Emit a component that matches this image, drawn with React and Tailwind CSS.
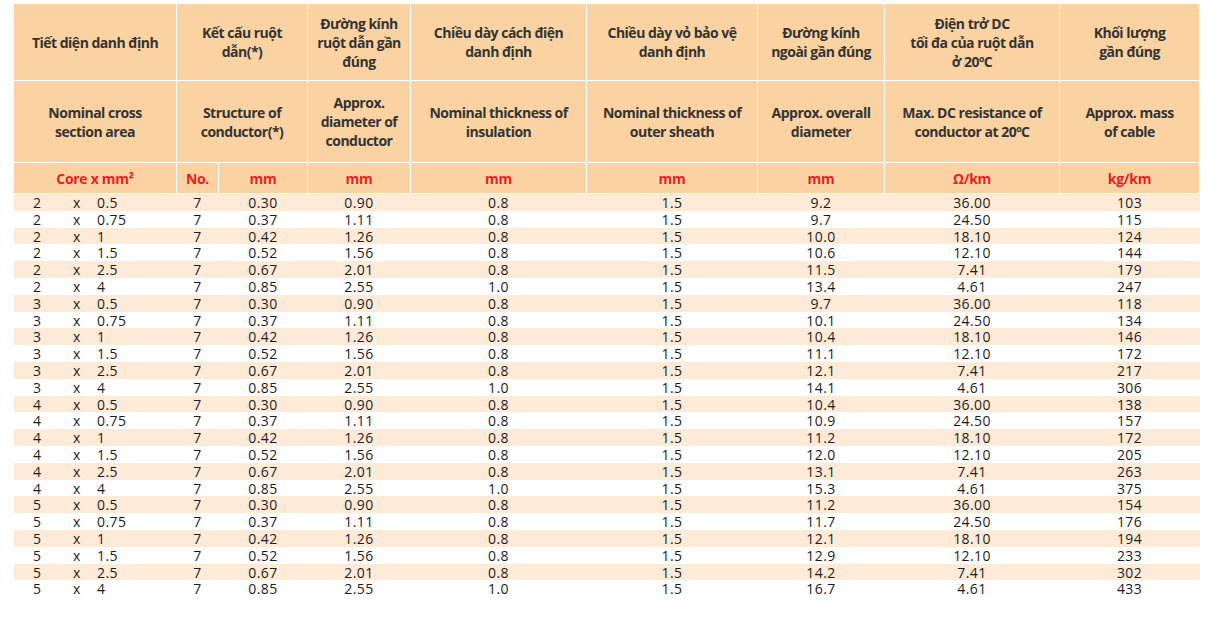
import React from "react";

const rows = [
  ["2", "0.5", "7", "0.30", "0.90", "0.8", "1.5", "9.2", "36.00", "103"],
  ["2", "0.75", "7", "0.37", "1.11", "0.8", "1.5", "9.7", "24.50", "115"],
  ["2", "1", "7", "0.42", "1.26", "0.8", "1.5", "10.0", "18.10", "124"],
  ["2", "1.5", "7", "0.52", "1.56", "0.8", "1.5", "10.6", "12.10", "144"],
  ["2", "2.5", "7", "0.67", "2.01", "0.8", "1.5", "11.5", "7.41", "179"],
  ["2", "4", "7", "0.85", "2.55", "1.0", "1.5", "13.4", "4.61", "247"],
  ["3", "0.5", "7", "0.30", "0.90", "0.8", "1.5", "9.7", "36.00", "118"],
  ["3", "0.75", "7", "0.37", "1.11", "0.8", "1.5", "10.1", "24.50", "134"],
  ["3", "1", "7", "0.42", "1.26", "0.8", "1.5", "10.4", "18.10", "146"],
  ["3", "1.5", "7", "0.52", "1.56", "0.8", "1.5", "11.1", "12.10", "172"],
  ["3", "2.5", "7", "0.67", "2.01", "0.8", "1.5", "12.1", "7.41", "217"],
  ["3", "4", "7", "0.85", "2.55", "1.0", "1.5", "14.1", "4.61", "306"],
  ["4", "0.5", "7", "0.30", "0.90", "0.8", "1.5", "10.4", "36.00", "138"],
  ["4", "0.75", "7", "0.37", "1.11", "0.8", "1.5", "10.9", "24.50", "157"],
  ["4", "1", "7", "0.42", "1.26", "0.8", "1.5", "11.2", "18.10", "172"],
  ["4", "1.5", "7", "0.52", "1.56", "0.8", "1.5", "12.0", "12.10", "205"],
  ["4", "2.5", "7", "0.67", "2.01", "0.8", "1.5", "13.1", "7.41", "263"],
  ["4", "4", "7", "0.85", "2.55", "1.0", "1.5", "15.3", "4.61", "375"],
  ["5", "0.5", "7", "0.30", "0.90", "0.8", "1.5", "11.2", "36.00", "154"],
  ["5", "0.75", "7", "0.37", "1.11", "0.8", "1.5", "11.7", "24.50", "176"],
  ["5", "1", "7", "0.42", "1.26", "0.8", "1.5", "12.1", "18.10", "194"],
  ["5", "1.5", "7", "0.52", "1.56", "0.8", "1.5", "12.9", "12.10", "233"],
  ["5", "2.5", "7", "0.67", "2.01", "0.8", "1.5", "14.2", "7.41", "302"],
  ["5", "4", "7", "0.85", "2.55", "1.0", "1.5", "16.7", "4.61", "433"],
];

const cols = "grid-cols-[162px_41px_88px_102px_175px_170px_126px_174px_139px]";

function H({ children, span = false }) {
  return (
    <div
      className={
        "bg-[#fbd3a3] flex items-center justify-center text-center text-[14px] leading-[19px] font-bold text-[#333333] tracking-[-0.5px] " +
        (span ? "col-span-2" : "")
      }
    >
      <div>{children}</div>
    </div>
  );
}

function U({ children }) {
  return (
    <div className="bg-[#fbd3a3] flex items-center justify-center text-[14px] font-bold text-[#ed1c24] tracking-[-0.3px]">
      {children}
    </div>
  );
}

export default function App() {
  return (
    <div
      className="w-[1218px] h-[617px] bg-white pl-[14px] pt-[4px]"
      style={{ fontFamily: '"Open Sans", "Noto Sans", sans-serif' }}
    >
      <div className="w-[1185px]">
        <div className={"grid gap-px bg-white grid-rows-[76px_81px_30px] " + cols}>
          <H>Tiết diện danh định</H>
          <H span>
            Kết cấu ruột
            <br />
            dẫn(*)
          </H>
          <H>
            Đường kính
            <br />
            ruột dẫn gần
            <br />
            đúng
          </H>
          <H>
            Chiều dày cách điện
            <br />
            danh định
          </H>
          <H>
            Chiều dày vỏ bảo vệ
            <br />
            danh định
          </H>
          <H>
            Đường kính
            <br />
            ngoài gần đúng
          </H>
          <H>
            Điện trở DC
            <br />
            tối đa của ruột dẫn
            <br />ở 20ºC
          </H>
          <H>
            Khối lượng
            <br />
            gần đúng
          </H>

          <H>
            Nominal cross
            <br />
            section area
          </H>
          <H span>
            Structure of
            <br />
            conductor(*)
          </H>
          <H>
            Approx.
            <br />
            diameter of
            <br />
            conductor
          </H>
          <H>
            Nominal thickness of
            <br />
            insulation
          </H>
          <H>
            Nominal thickness of
            <br />
            outer sheath
          </H>
          <H>
            Approx. overall
            <br />
            diameter
          </H>
          <H>
            Max. DC resistance of
            <br />
            conductor at 20ºC
          </H>
          <H>
            Approx. mass
            <br />
            of cable
          </H>

          <U>Core x mm²</U>
          <U>No.</U>
          <U>mm</U>
          <U>mm</U>
          <U>mm</U>
          <U>mm</U>
          <U>mm</U>
          <U>Ω/km</U>
          <U>kg/km</U>
        </div>

        <div className="mt-[1px] w-[1186px] text-[14px] leading-[14.8px] tracking-[0.4px] text-[#1f1b1c]">
          {rows.map((r, i) => (
            <div
              key={i}
              className={
                "grid h-[16.8px] gap-px pt-[2px] " + cols + " " + (i % 2 === 0 ? "bg-[#fdebd8]" : "bg-white")
              }
            >
              <div className="flex">
                <span className="w-[40px] pl-[19px]">{r[0]}</span>
                <span className="w-[43px] pl-[19px]">x</span>
                <span>{r[1]}</span>
              </div>
              <div className="text-center">{r[2]}</div>
              <div className="text-center">{r[3]}</div>
              <div className="text-center">{r[4]}</div>
              <div className="text-center">{r[5]}</div>
              <div className="text-center">{r[6]}</div>
              <div className="text-center">{r[7]}</div>
              <div className="text-center">{r[8]}</div>
              <div className="text-center">{r[9]}</div>
            </div>
          ))}
        </div>
      </div>
    </div>
  );
}
